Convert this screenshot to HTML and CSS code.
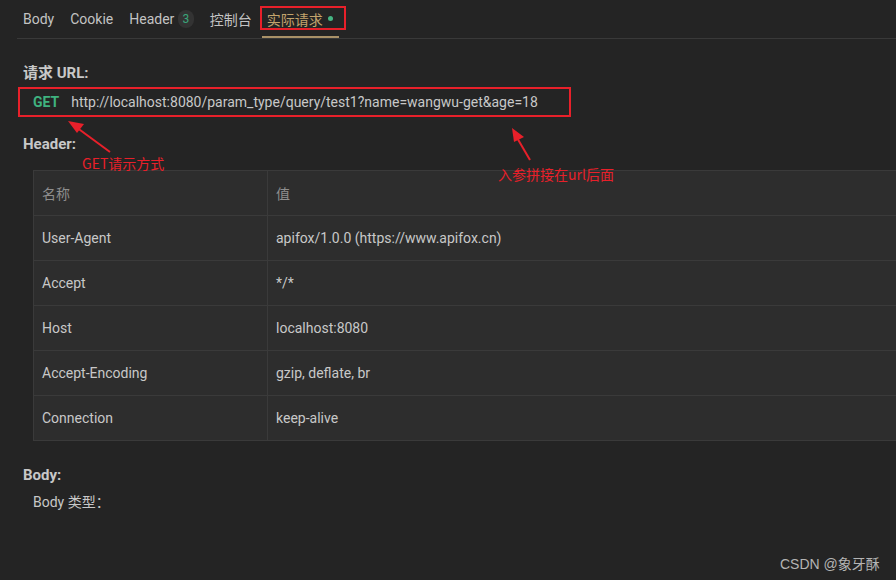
FILE: index.html
```html
<!DOCTYPE html>
<html lang="zh">
<head>
<meta charset="utf-8">
<link rel="stylesheet" href="styles.css">
</head>
<body>
<div class="page">
  <nav class="tabs">
    <span class="tab">Body</span>
    <span class="tab">Cookie</span>
    <span class="tab">Header <span class="badge">3</span></span>
    <span class="tab">控制台</span>
    <span class="tab active">实际请求<span class="dot"></span><span class="mark-box"></span></span>
  </nav>

  <section class="content">
    <h3 class="title url-title">请求 URL:</h3>
    <div class="url-box">
      <span class="method">GET</span>
      <span class="url">http://localhost:8080/param_type/query/test1?name=wangwu-get&amp;age=18</span>
    </div>

    <h3 class="title header-title">Header:</h3>
    <table class="headers">
      <thead>
        <tr><th class="c1">名称</th><th>值</th></tr>
      </thead>
      <tbody>
        <tr><td class="c1">User-Agent</td><td>apifox/1.0.0 (https://www.apifox.cn)</td></tr>
        <tr><td class="c1">Accept</td><td>*/*</td></tr>
        <tr><td class="c1">Host</td><td>localhost:8080</td></tr>
        <tr><td class="c1">Accept-Encoding</td><td>gzip, deflate, br</td></tr>
        <tr><td class="c1">Connection</td><td>keep-alive</td></tr>
      </tbody>
    </table>

    <h3 class="title body-title">Body:</h3>
    <div class="body-type">Body 类型：</div>
  </section>

  <svg class="arrows" width="896" height="580" viewBox="0 0 896 580">
    <g stroke="#e8202a" stroke-width="2" fill="#e8202a">
      <line x1="110" y1="152" x2="76" y2="127"/>
      <polygon points="68,121 84,124 77,133" stroke="none"/>
      <line x1="530" y1="160" x2="516" y2="136"/>
      <polygon points="512,128 524,137 514,142" stroke="none"/>
    </g>
  </svg>
  <span class="note note-get">GET请示方式</span>
  <span class="note note-url">入参拼接在url后面</span>
  <span class="watermark">CSDN @象牙酥</span>
</div>
</body>
</html>
```

FILE: styles.css
```css
* { box-sizing: border-box; }
html, body {
  margin: 0;
  padding: 0;
  background: #242424;
  overflow: hidden;
}
body {
  width: 896px;
  height: 580px;
  font-family: Roboto, "Noto Sans CJK SC", sans-serif;
  font-size: 14px;
  color: #c8c8c8;
}
.page {
  position: relative;
  width: 896px;
  height: 580px;
}
.tabs {
  display: flex;
  align-items: center;
  gap: 5px;
  height: 39px;
  margin-left: 17px;
  padding-bottom: 1px;
  border-bottom: 1px solid #393939;
}
.tab {
  position: relative;
  display: flex;
  align-items: center;
  height: 38px;
  padding: 0 5px 0 6px;
  color: #c3c3c3;
  white-space: pre;
}
.badge {
  display: inline-flex;
  align-items: center;
  justify-content: center;
  width: 16px;
  height: 18px;
  border-radius: 8px;
  background: #333333;
  color: #3aa57a;
  font-size: 12px;
}
.tab.active {
  color: #c2a36c;
  border-bottom: 2px solid #a99168;
  padding: 2px 6px 0 5px;
}
.dot {
  display: inline-block;
  width: 5px;
  height: 5px;
  margin-left: 5px;
  border-radius: 50%;
  background: #45b583;
}
.mark-box {
  position: absolute;
  left: -2px;
  top: 6px;
  width: 86px;
  height: 24px;
  border: 2px solid #e8202a;
}
.content {
  padding-left: 23px;
}
.title {
  margin: 0;
  font-size: 15px;
  font-weight: 700;
  color: #c8c8c8;
  line-height: 20px;
}
.url-title { margin-top: 24px; }
.url-box {
  display: flex;
  align-items: center;
  gap: 12px;
  width: 553px;
  height: 30px;
  margin: 4px 0 0 -5px;
  padding-left: 13px;
  border: 2px solid #e8202a;
}
.method {
  color: #3fb27f;
  font-weight: 700;
  font-size: 14px;
}
.url { color: #c8c8c8; }
.header-title { margin-top: 17px; }
.headers {
  margin: 16px 0 0 10px;
  width: 900px;
  border-collapse: collapse;
  background: #2d2d2d;
}
.headers th, .headers td {
  height: 45px;
  padding: 0 8px;
  text-align: left;
  font-weight: 400;
  border: 1px solid #3a3a3a;
}
.headers tr { height: 45px; }
.headers th { color: #8e8e8e; }
.headers .c1 { width: 234px; }
.body-title { margin-top: 24px; }
.body-type {
  margin: 7px 0 0 10px;
  line-height: 20px;
}
.arrows {
  position: absolute;
  left: 0;
  top: 0;
  pointer-events: none;
}
.note {
  position: absolute;
  color: #e8202a;
  font-size: 14px;
  font-family: "Noto Sans CJK SC", sans-serif;
  line-height: 18px;
}
.note-get { left: 82px; top: 154px; }
.note-url { left: 498px; top: 165px; }
.watermark {
  position: absolute;
  left: 780px;
  top: 553px;
  color: #b4b4b4;
  font-family: "Liberation Sans", "Noto Sans CJK SC", sans-serif;
  font-size: 14px;
}
```
